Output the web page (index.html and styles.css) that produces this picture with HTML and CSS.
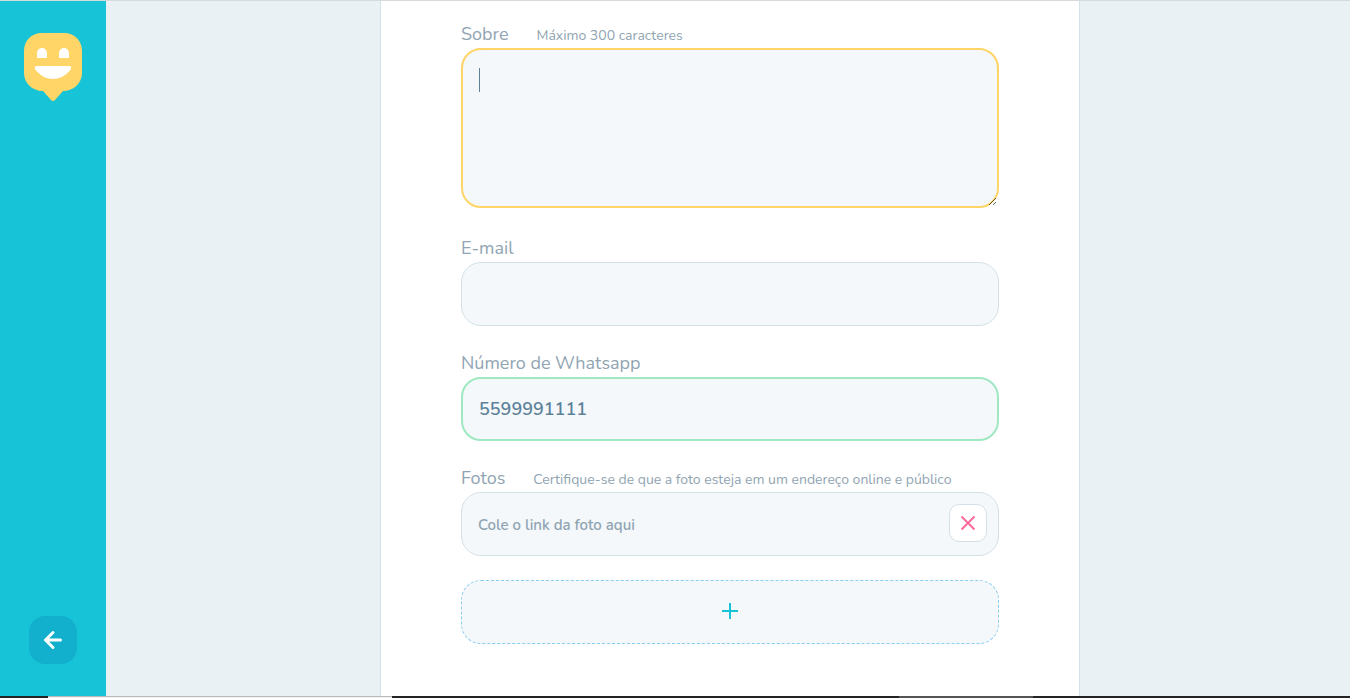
FILE: index.html
```html
<!DOCTYPE html>
<html lang="pt-BR">
<head>
<meta charset="utf-8">
<meta name="viewport" content="width=device-width, initial-scale=1">
<title>Perfil</title>
<link rel="stylesheet" href="styles.css">
</head>
<body>
<div class="app">
  <aside class="sidebar">
    <svg class="logo" viewBox="0 0 58 69" aria-hidden="true">
      <path fill="#ffd567" d="M18 0H40C51 0 58 8 58 18V40C58 50 50 58 39 58L31 67Q29 69 27 67L19 58C8 58 0 50 0 40V18C0 8 7 0 18 0Z"/>
      <path fill="#fff" d="M13 25V20a5 5 0 0 1 10 0V25ZM35 25V20a5 5 0 0 1 10 0V25ZM13 33H45Q48 33 47 36C43 42 36 46 29 46S15 42 11 36Q10 33 13 33Z"/>
    </svg>
    <button class="back" type="button" aria-label="Voltar">
      <svg class="back-icon" viewBox="0 0 20 20" aria-hidden="true"><path d="M17.500 10H3M10 2.500L2.500 10L10 17.500"/></svg>
    </button>
  </aside>
  <main class="content">
    <form class="panel">
      <div class="field field-about">
        <div class="heading"><label class="label" for="about">Sobre</label><span class="hint">Máximo 300 caracteres</span></div>
        <div class="control">
          <textarea class="input about" id="about" maxlength="300"></textarea>
          <span class="caret"></span>
        </div>
      </div>
      <div class="field">
        <div class="heading"><label class="label" for="email">E-mail</label></div>
        <input class="input" id="email" type="email">
      </div>
      <div class="field">
        <div class="heading"><label class="label" for="phone">Número de Whatsapp</label></div>
        <input class="input valid" id="phone" type="tel" value="5599991111">
      </div>
      <div class="field">
        <div class="heading"><label class="label" for="photo">Fotos</label><span class="hint">Certifique-se de que a foto esteja em um endereço online e público</span></div>
        <div class="control">
          <input class="input photo" id="photo" type="url" placeholder="Cole o link da foto aqui">
          <button class="remove" type="button" aria-label="Remover foto">
            <svg class="remove-icon" viewBox="0 0 14 14" aria-hidden="true"><path d="M0.500 0.500L13.500 13.500M13.500 0.500L0.500 13.500"/></svg>
          </button>
        </div>
      </div>
      <button class="add" type="button" aria-label="Adicionar foto">
        <svg class="add-icon" viewBox="0 0 16 16" aria-hidden="true"><path d="M8 0V16M0 8H16"/></svg>
      </button>
    </form>
  </main>
</div>
<footer class="edge"><span class="edge-start"></span><span class="edge-light"></span><span class="edge-dark"></span><span class="edge-mid"></span><span class="edge-dark"></span></footer>
</body>
</html>
```

FILE: styles.css
```css
* { box-sizing: border-box; }
body {
  display: flex;
  flex-direction: column;
  min-height: 100vh;
  margin: 0;
  border-top: 1px solid #d8dade;
  background: #e9f1f5;
  font-family: Nunito, Lato, sans-serif;
  color: #90a4b2;
}
button { padding: 0; cursor: pointer; }
svg { display: block; }
.app { display: flex; flex: 1; }
.sidebar {
  display: flex;
  flex-direction: column;
  align-items: center;
  justify-content: space-between;
  width: 106px;
  padding: 32px 0;
  background: #16c3d7;
}
.logo { width: 58px; height: 69px; }
.back {
  display: grid;
  place-items: center;
  width: 48px;
  height: 48px;
  border: 0;
  border-radius: 16px;
  background: #12b0cc;
}
.back-icon { width: 20px; height: 20px; fill: none; stroke: #fff; stroke-width: 3; stroke-linecap: round; stroke-linejoin: round; }
.content { display: flex; flex: 1; justify-content: center; padding-left: 4px; }
.panel {
  width: 100%;
  max-width: 700px;
  padding: 20px 80px 52px;
  border: 1px solid #d3e1e6;
  border-width: 0 1px;
  background: #fff;
}
.field { margin-bottom: 24px; }
.field-about { margin-bottom: 27px; }
.heading { display: flex; align-items: baseline; gap: 28px; line-height: 27px; }
.label { font-size: 18px; }
.hint { font-size: 14px; line-height: 20px; }
.control { position: relative; }
.input {
  display: block;
  width: 100%;
  height: 64px;
  padding: 0 16px;
  border: 1px solid #d3e1e6;
  border-radius: 20px;
  outline: 0;
  background: #f4f8fb;
  color: #5c8199;
  font-family: inherit;
  font-size: 18px;
  font-weight: 600;
}
.about { height: 160px; padding: 16px; border: 2px solid #ffd567; line-height: 27px; resize: vertical; }
.caret { position: absolute; top: 20px; left: 18px; width: 1px; height: 24px; background: #5c8199; }
.valid { border: 2px solid #9fe8c2; }
.photo { padding-right: 60px; }
.photo::placeholder { color: #90a4b2; font-size: 15px; opacity: 1; }
.remove {
  position: absolute;
  top: 12px;
  right: 12px;
  display: grid;
  place-items: center;
  width: 38px;
  height: 38px;
  border: 1px solid #d3e1e6;
  border-radius: 10px;
  background: #fff;
}
.remove-icon { width: 14px; height: 14px; fill: none; stroke: #ff6b9b; stroke-width: 2; overflow: visible; }
.add {
  display: grid;
  place-items: center;
  width: 100%;
  height: 64px;
  padding-bottom: 2px;
  border: 1px dashed #8bcdee;
  border-radius: 20px;
  background: #f4f8fb;
}
.add-icon { width: 16px; height: 16px; fill: none; stroke: #16c3d7; stroke-width: 2; }
.edge { display: grid; grid-template-columns: 48fr 344fr 507fr 134fr 317fr; height: 2px; }
.edge-start, .edge-dark { background: #252326; }
.edge-light { border-top: 1px solid #b9b9b9; background: #f1f1f1; }
.edge-mid { background: #555355; }
```
